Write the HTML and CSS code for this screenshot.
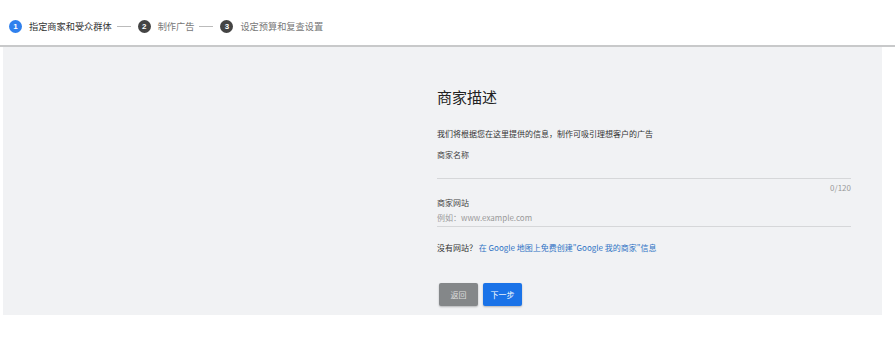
FILE: index.html
```html
<!DOCTYPE html>
<html lang="zh-CN">
<head>
    <meta charset="UTF-8">
    <title>商家描述</title>
    <link rel="stylesheet" href="styles.css">
</head>
<body>
    <header class="steps">
        <div class="step active"><span class="num">1</span>指定商家和受众群体</div>
        <span class="dash"></span>
        <div class="step"><span class="num">2</span>制作广告</div>
        <span class="dash"></span>
        <div class="step"><span class="num">3</span>设定预算和复查设置</div>
    </header>
    <main class="panel">
        <div class="form">
            <h1>商家描述</h1>
            <p class="intro">我们将根据您在这里提供的信息，制作可吸引理想客户的广告</p>
            <div class="field">
                <label>商家名称</label>
                <div class="input"></div>
                <div class="count">0/120</div>
            </div>
            <div class="field">
                <label>商家网站</label>
                <div class="input placeholder">例如：www.example.com</div>
            </div>
            <p class="nosite">没有网站？ <a href="#">在 Google 地图上免费创建"Google 我的商家"信息</a></p>
            <div class="actions">
                <button class="btn back">返回</button>
                <button class="btn next">下一步</button>
            </div>
        </div>
    </main>
</body>
</html>
```

FILE: styles.css
```css
body {
    margin: 0;
    background: #fff;
    font-family: "Noto Sans CJK SC", "Liberation Sans", sans-serif;
    color: #333;
}
.steps {
    height: 47px;
    display: flex;
    align-items: center;
    padding: 7px 0 0 9px;
    box-sizing: border-box;
    border-bottom: 2px solid #c8c9ca;
    font-size: 9.2px;
    color: #777;
}
.step {
    display: flex;
    align-items: center;
}
.step.active {
    color: #333;
}
.num {
    width: 13px;
    height: 13px;
    border-radius: 50%;
    background: #444;
    color: #fff;
    font-size: 8px;
    font-weight: 700;
    font-family: "Liberation Sans", sans-serif;
    display: flex;
    align-items: center;
    justify-content: center;
    margin-right: 7px;
}
.step.active .num {
    background: #2f80ed;
}
.dash {
    width: 14px;
    height: 1px;
    background: #bbb;
    margin: 0 7px 0 5px;
}
.panel {
    margin: 0 13px 0 3px;
    height: 268px;
    background: #f1f2f4;
}
.form {
    width: 414px;
    margin-left: 434px;
    padding-top: 38px;
}
h1 {
    margin: 0;
    font-size: 15px;
    font-weight: 400;
    color: #222;
    line-height: 24px;
}
.intro {
    margin: 19px 0 0;
    font-size: 8px;
    line-height: 12px;
    color: #333;
}
.field label {
    display: block;
    font-size: 8px;
    line-height: 12px;
    color: #444;
}
.field:first-of-type label {
    margin-top: 9px;
}
.input {
    height: 18px;
    border-bottom: 1px solid #d6d7d9;
    box-sizing: border-box;
}
.placeholder {
    height: 18px;
    font-size: 8px;
    line-height: 12px;
    padding-top: 3px;
    color: #999;
}
.count {
    text-align: right;
    font-size: 8px;
    line-height: 12px;
    color: #999;
    margin-top: 3px;
}
.field + .field {
    margin-top: 3px;
}
.nosite {
    margin: 15px 0 0;
    font-size: 8px;
    line-height: 12px;
    color: #333;
}
.nosite a {
    color: #2f72c4;
    text-decoration: none;
}
.actions {
    display: flex;
    gap: 5px;
    margin-top: 29px;
    padding-left: 2px;
}
.btn {
    height: 23px;
    width: 39px;
    border: none;
    border-radius: 2px;
    font-family: inherit;
    font-size: 8px;
    color: #fff;
    box-shadow: 0 1px 2px rgba(0, 0, 0, 0.25);
    padding: 0;
}
.back {
    background: #848789;
    color: #ddd;
}
.next {
    background: #1a73e8;
}
```
